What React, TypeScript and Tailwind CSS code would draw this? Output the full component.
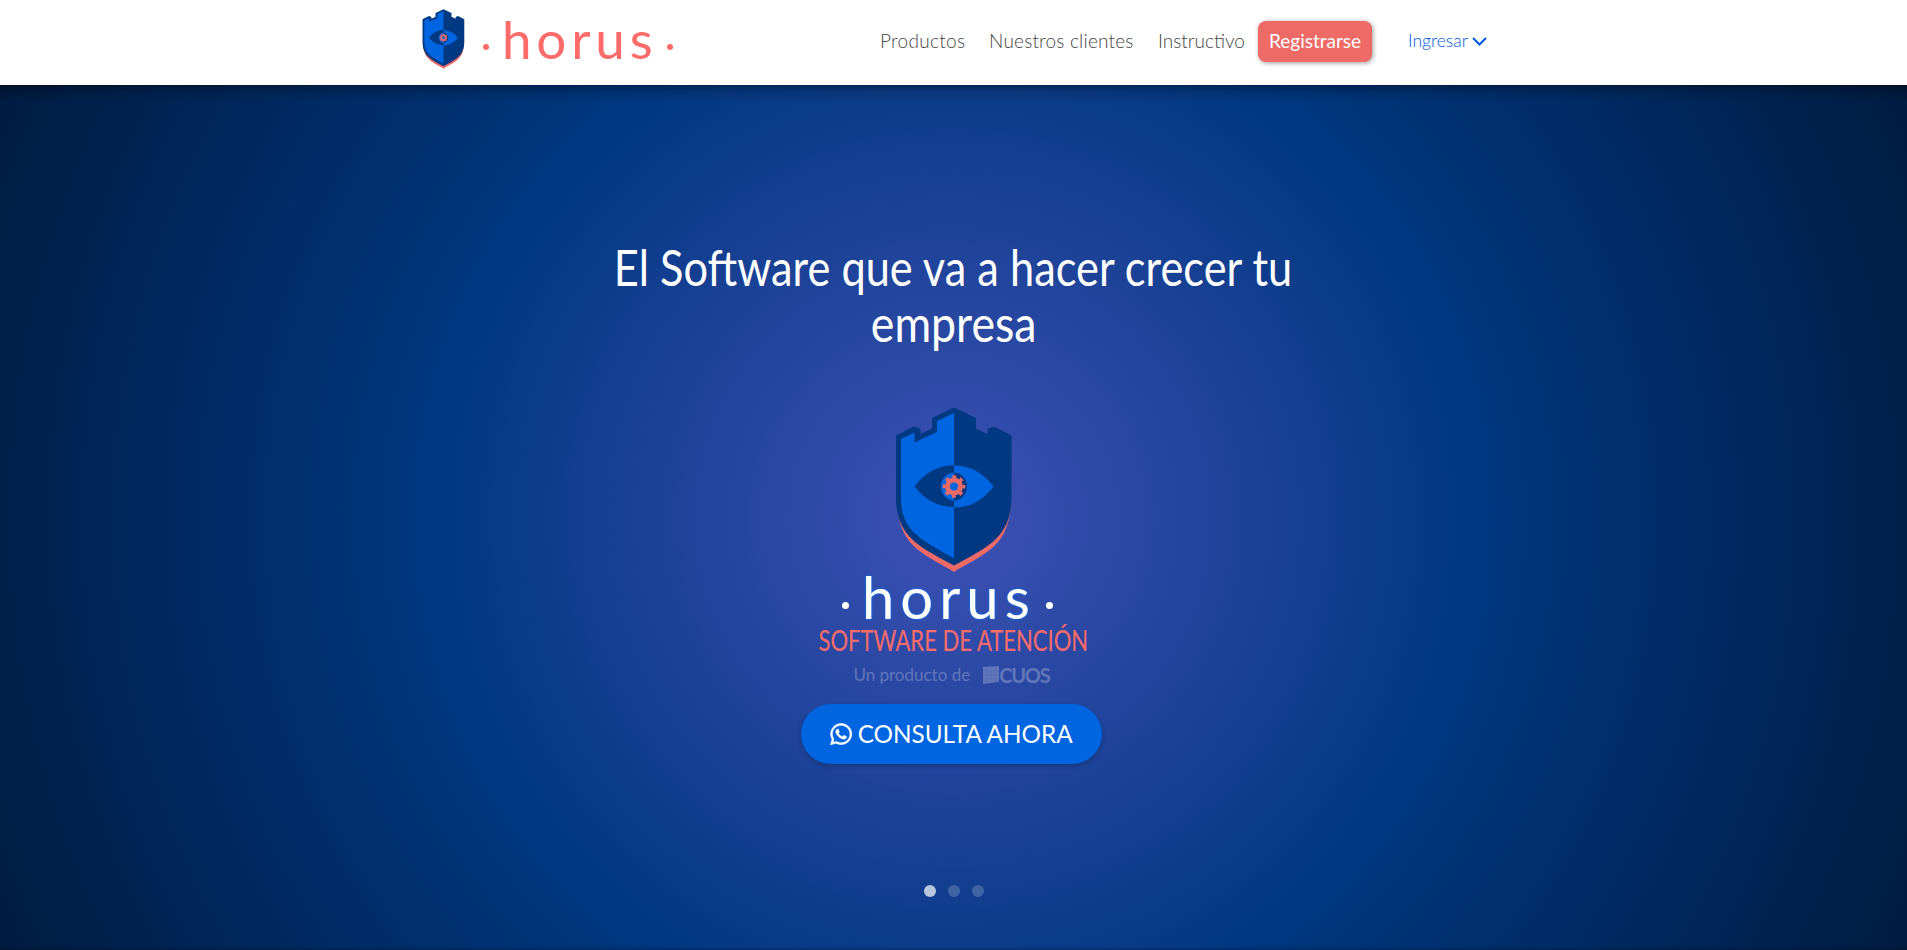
import { FaWhatsapp } from "react-icons/fa";

function Shield({ className }: { className: string }) {
  return (
    <svg viewBox="0 0 116 166" className={className} aria-hidden="true">
      <path d="M1 92C1 142 32 148 58 165C84 148 115 142 115 92L112 88H4Z" fill="#ee6a67" />
      <path d="M0 28.500L18 19.500L24.500 22V27L36 21.500V11L58 0.500L80 11V21.500L91.500 27V22L98 19.500L115.500 28.500V90C115.500 130 92 140 58 158.500C24 140 0 130 0 90Z" fill="#003882" />
      <path d="M5 32L18.500 25.500V35.500L41 25V14L58 6V151.500C23 131 5 124 5 90Z" fill="#0065e1" />
      <path d="M18.500 79.500C39 51 77 51 97.500 79.500C77 107 39 107 18.500 79.500Z" fill="#003882" />
      <path d="M58 58.500C75 58.500 87 66 97.500 79.500C87 93 75 100.500 58 100.500Z" fill="#0065e1" />
      <path d="M58 65.500A13 14 0 0 0 58 93.500Z" fill="#0065e1" />
      <path d="M58 65.500A13 14 0 0 1 58 93.500Z" fill="#003882" />
      <circle cx="58" cy="79.500" r="4.500" fill="#0065e1" />
      <circle cx="58" cy="79.500" r="6.500" fill="none" stroke="#ee6a67" strokeWidth="5" />
      <circle cx="58" cy="79.500" r="9.800" fill="none" stroke="#ee6a67" strokeWidth="3" strokeDasharray="3.850 3.850" strokeDashoffset="1.920" />
    </svg>
  );
}

function CuosMark() {
  return (
    <svg viewBox="0 0 16 18" className="h-[18px] w-4" fill="currentColor" aria-hidden="true">
      <path d="M0 1L16 0V16L0 18Z" />
      <path d="M4 1V17M8 1V17M12 1V16M0 5H16M0 9H16M0 13H16" stroke="#4b61b2" strokeWidth=".3" />
    </svg>
  );
}

export default function App() {
  return (
    <div className="flex h-[950px] w-full flex-col overflow-hidden bg-white font-['Lato',sans-serif]">
      <header className="flex h-[85px] shrink-0 items-start bg-white pl-[422px]">
        <a className="flex items-start pt-[9px] text-[#ff6b68]">
          <Shield className="h-[60px] w-[43px]" />
          <span className="ml-[18px] mt-[35px] size-[6px] rounded-full bg-[#ff6b68]" />
          <span className="ml-[13px] mt-[-2px] block w-[156px] whitespace-nowrap text-[53px] leading-[64px] tracking-[4.800px]">horus</span>
          <span className="ml-[9px] mt-[35px] size-[6px] rounded-full bg-[#ff6b68]" />
        </a>
        <nav className="ml-[207px] flex h-[83px] items-center whitespace-nowrap text-[19px] font-light text-[#444]">
          <a className="w-[109px] tracking-[0.3px]">Productos</a>
          <a className="w-[169px] tracking-[0.2px]">Nuestros clientes</a>
          <a className="w-[100px]">Instructivo</a>
          <a className="flex h-[41px] w-[114px] items-center justify-center rounded-lg bg-[#ee6a67] font-normal text-white shadow-[1px_1px_5px_rgba(0,0,0,.4)]">Registrarse</a>
          <a className="ml-9 flex items-center gap-[4px] text-[17.5px] text-[#0057e0]">
            Ingresar
            <svg viewBox="0 0 15 9" className="h-[9px] w-[15px]" fill="none" stroke="currentColor" strokeWidth="2"><path d="M1 1L7.500 7.500L14 1" /></svg>
          </a>
        </nav>
      </header>
      <main className="flex flex-1 flex-col items-center bg-[linear-gradient(to_bottom,rgba(0,0,0,.35)_0,rgba(0,0,0,.12)_7px,transparent_17px,transparent_calc(100%-4px),rgba(0,0,0,.2)_100%),radial-gradient(circle,#3f51b5_0%,#003780_50%,#001b40_100%)]">
        <h1 className="mt-[154px] flex flex-col items-center whitespace-nowrap text-[51px] leading-[56px] text-white">
          <span className="block scale-x-[.85]">El Software que va a hacer crecer tu</span>
          <span className="block scale-x-[.875]">empresa</span>
        </h1>
        <Shield className="mt-[56px] h-[166px] w-[116px]" />
        <div className="-ml-3 flex h-[52px] items-start text-white">
          <span className="mt-[29px] size-[7px] rounded-full bg-white" />
          <span className="ml-[13px] mt-[-2px] block w-[174px] whitespace-nowrap text-[58px] leading-[52px] tracking-[6px] [text-shadow:0_0_3px_#0078ff]">horus</span>
          <span className="ml-[10px] mt-[29px] size-[7px] rounded-full bg-white" />
        </div>
        <p className="h-[30px] scale-x-[.787] whitespace-nowrap text-[28px] leading-[30px] text-[#ff6b68]">SOFTWARE DE ATENCIÓN</p>
        <div className="-ml-1 mt-[10px] flex h-5 items-center whitespace-nowrap text-[17px] text-[#6276ba]">
          Un producto de
          <span className="ml-[13px] flex items-center"><CuosMark /><b className="text-[20px] tracking-[-1.2px]">CUOS</b></span>
        </div>
        <a className="-ml-[5px] mt-[19px] flex h-[60px] w-[301px] items-center justify-center gap-[4px] whitespace-nowrap rounded-full bg-[#0065e1] text-[24.300px] text-white shadow-[0_2px_5px_rgba(0,0,0,.22)]">
          <FaWhatsapp stroke="currentColor" strokeWidth="12" /> CONSULTA AHORA
        </a>
        <div className="mt-[121px] flex gap-3">
          <i className="size-3 rounded-full bg-white/70" />
          <i className="size-3 rounded-full bg-white/20" />
          <i className="size-3 rounded-full bg-white/20" />
        </div>
      </main>
    </div>
  );
}
